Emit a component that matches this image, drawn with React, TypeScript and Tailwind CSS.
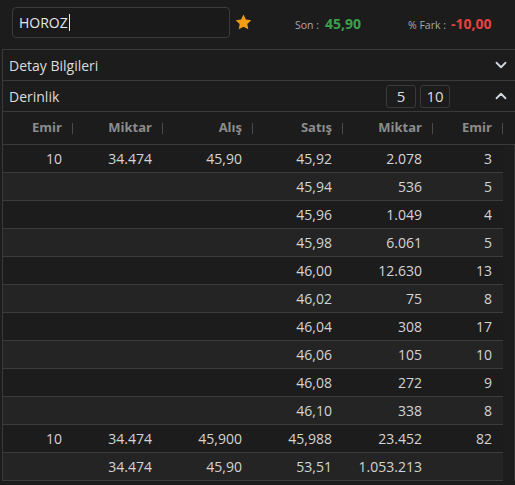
import { ChevronDown, ChevronUp } from 'lucide-react';

type Row = [string, string, string, string, string, string];

const rows: Row[] = [
  ['10', '34.474', '45,90', '45,92', '2.078', '3'],
  ['', '', '', '45,94', '536', '5'],
  ['', '', '', '45,96', '1.049', '4'],
  ['', '', '', '45,98', '6.061', '5'],
  ['', '', '', '46,00', '12.630', '13'],
  ['', '', '', '46,02', '75', '8'],
  ['', '', '', '46,04', '308', '17'],
  ['', '', '', '46,06', '105', '10'],
  ['', '', '', '46,08', '272', '9'],
  ['', '', '', '46,10', '338', '8'],
  ['10', '34.474', '45,900', '45,988', '23.452', '82'],
  ['', '34.474', '45,90', '53,51', '1.053.213', ''],
];

const headers = ['Emir', 'Miktar', 'Alış', 'Satış', 'Miktar', 'Emir'];
const widths = ['w-[70px]', 'w-[90px]', 'w-[90px]', 'w-[90px]', 'w-[90px]', 'w-[70px]'];

function Star(): JSX.Element {
  return (
    <svg width="17" height="16" viewBox="0 0 24 23" className="shrink-0">
      <path d="M12 0.8l3.4 7.1 7.8 1-5.7 5.4 1.4 7.7L12 18.3 5.1 22l1.4-7.7L0.8 8.9l7.8-1z" fill="#f29d16" />
    </svg>
  );
}

export default function App(): JSX.Element {
  return (
    <div className="w-[515px] h-[485px] overflow-hidden bg-[#1c1c1c] text-[#d4d4d4] font-['Open_Sans',sans-serif]">
      {/* top bar */}
      <div className="h-[49px] flex items-start pt-[7px] pl-[12px]">
        <div className="w-[218px] h-[31px] rounded-[4px] border border-[#3b3b3b] bg-[#1a1a1a] flex items-center pl-[6px] text-[14px] text-[#e6e6e6]">
          <span>HOROZ</span>
          <span className="ml-px w-px h-[17px] bg-[#e6e6e6]" />
        </div>
        <div className="ml-[5px] mt-[7px]">
          <Star />
        </div>
        <div className="ml-[43px] mt-[6px] flex items-baseline">
          <span className="text-[10.5px] text-[#a8a8a8]">Son :</span>
          <span className="ml-[6px] text-[14px] font-bold text-[#3aa14a]">45,90</span>
        </div>
        <div className="ml-[47px] mt-[6px] flex items-baseline">
          <span className="text-[10.5px] text-[#a8a8a8]">% Fark :</span>
          <span className="ml-[5px] text-[14px] font-bold text-[#e8413f]">-10,00</span>
        </div>
      </div>

      {/* panel */}
      <div className="ml-[2px] border-l border-t border-[#3a3a3a]">
        <div className="h-[31px] border-b border-[#3a3a3a] flex items-center justify-between pl-[6px] pr-[5px] text-[14px] text-[#dcdcdc]">
          <span>Detay Bilgileri</span>
          <ChevronDown size={18} strokeWidth={2.4} className="text-[#cfd8e0]" />
        </div>
        <div className="h-[31px] border-b border-[#3a3a3a] flex items-center pl-[6px] pr-[5px] text-[14px] text-[#dcdcdc]">
          <span className="flex-1">Derinlik</span>
          <div className="flex items-center gap-[4px] mr-[42px]">
            <div className="w-[30px] h-[23px] rounded-[3px] border border-[#3a3a3a] flex items-center justify-center text-[15px]">5</div>
            <div className="w-[30px] h-[23px] rounded-[3px] border border-[#3a3a3a] flex items-center justify-center text-[15px]">10</div>
          </div>
          <ChevronUp size={18} strokeWidth={2.4} className="text-[#cfd8e0]" />
        </div>

        {/* header */}
        <div className="h-[33px] border-b border-[#3a3a3a] flex text-[13px] font-bold text-[#8c8c8c]">
          {headers.map((h, i) => (
            <div key={i} className={`${widths[i]} flex items-center justify-end`}>
              <span>{h}</span>
              <span className="ml-[10px] w-px h-[11px] bg-[#4a4a4a]" />
            </div>
          ))}
        </div>

        {/* body */}
        <div className="flex">
          <div className="w-[500px] flex flex-col">
            {rows.map((r, ri) => (
              <div key={ri} className={`h-[28px] border-b border-[#3c3c3c] flex text-[14px] ${ri % 2 === 1 ? 'bg-[#242424]' : 'bg-[#1c1c1c]'}`}>
                {r.map((c, ci) => (
                  <div key={ci} className={`${widths[ci]} flex items-center justify-end pr-[11px]`}>
                    {c}
                  </div>
                ))}
              </div>
            ))}
          </div>
          <div className="w-[12px] bg-[#1d1d1d] border-r border-[#323232]" />
        </div>
      </div>
    </div>
  );
}
